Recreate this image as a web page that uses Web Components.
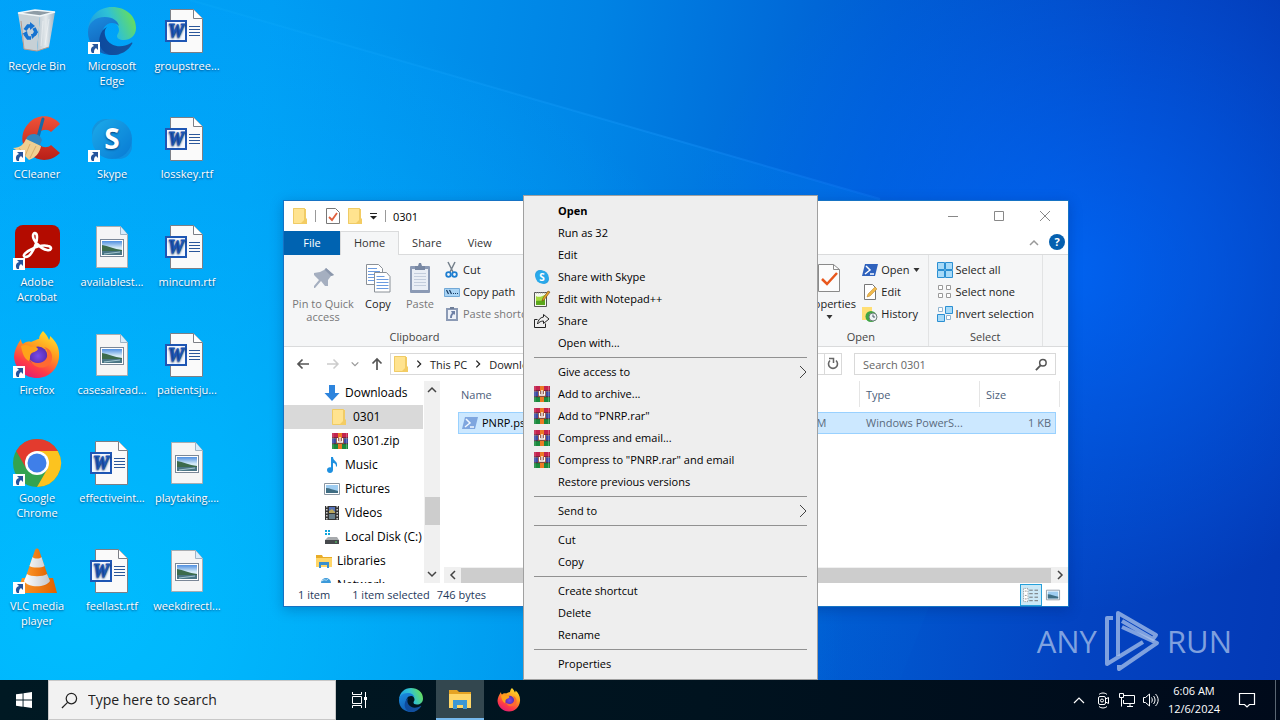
<!DOCTYPE html>
<html lang="en">
<head>
<meta charset="utf-8">
<title>Desktop</title>
<style>
  html, body {
    height: 100%;
  }
  body {
    margin: 0;
    overflow: hidden;
    font: 11px/15px "Open Sans", "Noto Sans", sans-serif;
    color: #111;
  }
</style>
</head>
<body>
<desktop-shell>
  <desktop-icon icon="recycle">Recycle Bin</desktop-icon>
  <desktop-icon icon="ccleaner" shortcut>CCleaner</desktop-icon>
  <desktop-icon icon="acrobat" shortcut>Adobe Acrobat</desktop-icon>
  <desktop-icon icon="firefox" shortcut>Firefox</desktop-icon>
  <desktop-icon icon="chrome" shortcut>Google Chrome</desktop-icon>
  <desktop-icon icon="vlc" shortcut>VLC media player</desktop-icon>
  <desktop-icon icon="edge" shortcut>Microsoft Edge</desktop-icon>
  <desktop-icon icon="skype" shortcut>Skype</desktop-icon>
  <desktop-icon icon="image">availablest...</desktop-icon>
  <desktop-icon icon="image">casesalread...</desktop-icon>
  <desktop-icon icon="word">effectiveint...</desktop-icon>
  <desktop-icon icon="word">feellast.rtf</desktop-icon>
  <desktop-icon icon="word">groupstree...</desktop-icon>
  <desktop-icon icon="word">losskey.rtf</desktop-icon>
  <desktop-icon icon="word">mincum.rtf</desktop-icon>
  <desktop-icon icon="word">patientsju...</desktop-icon>
  <desktop-icon icon="image">playtaking....</desktop-icon>
  <desktop-icon icon="image">weekdirectl...</desktop-icon>

  <brand-mark slot="overlay"></brand-mark>
  <explorer-window slot="overlay"></explorer-window>
  <context-menu slot="overlay">
    <menu-item primary>Open</menu-item>
    <menu-item>Run as 32</menu-item>
    <menu-item>Edit</menu-item>
    <menu-item icon="skype-small">Share with Skype</menu-item>
    <menu-item icon="notepad">Edit with Notepad++</menu-item>
    <menu-item icon="share">Share</menu-item>
    <menu-item>Open with...</menu-item>
    <hr>
    <menu-item submenu>Give access to</menu-item>
    <menu-item icon="rar">Add to archive...</menu-item>
    <menu-item icon="rar">Add to "PNRP.rar"</menu-item>
    <menu-item icon="rar">Compress and email...</menu-item>
    <menu-item icon="rar">Compress to "PNRP.rar" and email</menu-item>
    <menu-item>Restore previous versions</menu-item>
    <hr>
    <menu-item submenu>Send to</menu-item>
    <hr>
    <menu-item>Cut</menu-item>
    <menu-item>Copy</menu-item>
    <hr>
    <menu-item>Create shortcut</menu-item>
    <menu-item>Delete</menu-item>
    <menu-item>Rename</menu-item>
    <hr>
    <menu-item>Properties</menu-item>
  </context-menu>
  <task-bar slot="taskbar"></task-bar>
</desktop-shell>

<script>
// name: [viewBox width, viewBox height, markup]
const ICONS = {
  recycle: [48, 48, `
    <defs><linearGradient id="g" x1="0" x2="1"><stop offset="0" stop-color="#b9c6cf"/><stop offset=".5" stop-color="#e4e9ec"/><stop offset="1" stop-color="#9eb4c4"/></linearGradient></defs>
    <path d="M5 6 27 9 24 44 11 42Z" fill="#c6d0d6"/>
    <path d="M27 9 42 5 36 40 24 44Z" fill="url(#g)"/>
    <path d="M5 6 22 3 42 5 27 9Z" fill="#8e9ca6" stroke="#f1f6f8" stroke-width="1.4"/>
    <path d="M8 14 11 42 24 44 36 40" fill="none" stroke="#b99b8c" stroke-width="1"/>
    <path d="m30 14-2 25M36 12l-4 26" stroke="#fff" stroke-opacity=".4"/>
    <g fill="none" stroke="#1673d1" stroke-width="3.600"><path d="m12 23 3-4h3"/><path d="m21 21 2 4-2 3"/><path d="M18 31h-3l-3-4"/></g>
    <path d="m17 15 5 4-5 4zM24 27l-5 5-1-5zM9 27l5-3 1 5z" fill="#1673d1"/>`],
  edge: [48, 48, `
    <defs>
      <linearGradient id="a" x1="0" y1=".6" x2="1" y2=".3"><stop offset="0" stop-color="#1b9de2"/><stop offset=".5" stop-color="#2fc1d5"/><stop offset="1" stop-color="#6be052"/></linearGradient>
      <linearGradient id="b" x1="0" y1="0" x2=".4" y2="1"><stop offset="0" stop-color="#1b8de0"/><stop offset="1" stop-color="#1160b7"/></linearGradient>
      <linearGradient id="c" x1="0" x2="1"><stop offset="0" stop-color="#0d4a9e"/><stop offset="1" stop-color="#15549f"/></linearGradient>
    </defs>
    <path d="M0 23C1 9 11 0 24 0c14 0 24 9 24 21 0 8-6 12-12 12-5 0-7-2-7-4s2-3 2-6c0-5-5-10-13-10C8 13 2 17 0 23Z" fill="url(#a)"/>
    <path d="M0 25c0-9 7-15 17-15 8 0 13 4 14 9-2-2-4-3-7-3-7 0-11 7-9 15 2 9 9 16 17 16-3 1-5 1-8 1C10 48 0 38 0 25Z" fill="url(#b)"/>
    <path d="M19 20c-3 3-3 8 0 13 4 6 14 9 24 3 1-1 2 0 1 1-4 7-11 11-19 11-10 0-16-10-13-19 1-4 3-7 7-9Z" fill="url(#c)"/>`],
  skype: [48, 48, `
    <defs><linearGradient id="s" x1="0" x2="1" y2="1"><stop offset="0" stop-color="#1cabea"/><stop offset="1" stop-color="#0879d3"/></linearGradient></defs>
    <circle cx="18" cy="18" r="14" fill="#1595dc"/><circle cx="31" cy="31" r="13" fill="#0f8fe0"/>
    <circle cx="24" cy="24" r="20" fill="url(#s)"/>
    <text x="24" y="34" text-anchor="middle" font-family="Open Sans" font-weight="700" font-size="28" fill="#fff">S</text>`],
  "skype-small": [16, 16, `
    <circle cx="6" cy="6" r="5" fill="#2aa2e3"/><circle cx="10" cy="10" r="5" fill="#2aa2e3"/><circle cx="8" cy="8" r="6.5" fill="#2aa9ea"/>
    <text x="8" y="12" text-anchor="middle" font-family="Open Sans" font-weight="700" font-size="10" fill="#fff">S</text>`],
  ccleaner: [48, 48, `
    <defs><linearGradient id="r" y2="1" x2="0"><stop offset="0" stop-color="#ef5238"/><stop offset="1" stop-color="#b91f18"/></linearGradient></defs>
    <path d="M47 9 38 17c-3-3-8-3-11 0-4 4-4 10 0 13 3 3 8 3 11 0l9 8C38 47 25 47 17 39 7 31 7 17 16 8c8-9 23-9 31 1Z" fill="url(#r)"/>
    <path d="M30 4 25 22" stroke="#176ba8" stroke-width="3" stroke-linecap="round"/>
    <path d="M14 22c4-5 13-4 15 3l-3 7-14-5Z" fill="#3286bf"/>
    <path d="m13 24 15 7c-1 7-6 12-12 14l-4-4-4 1-2-5-6-4c7 0 11-4 13-9Z" fill="#f0cf91"/>
    <path d="m6 33 6 8 5-12M17 43l6-12" fill="none" stroke="#d9ad6c"/>`],
  acrobat: [48, 48, `
    <rect x="2" y="2" width="45" height="43" rx="8" fill="#b30b00"/>
    <path d="M12 34c-3-1 0-5 7-8 6-3 12-4 16-3 5 1 3 5-1 4-6-1-14-9-14-14 0-4 4-4 4 1 0 7-6 21-12 20Z" fill="none" stroke="#fff" stroke-width="2.6" stroke-linejoin="round"/>`],
  firefox: [48, 48, `
    <defs>
      <linearGradient id="f" x1=".8" y1="0" x2=".3" y2="1"><stop offset="0" stop-color="#ffe52e"/><stop offset=".4" stop-color="#ff9a1f"/><stop offset=".75" stop-color="#ff3b47"/><stop offset="1" stop-color="#e01c74"/></linearGradient>
      <radialGradient id="p"><stop offset="0" stop-color="#7a4bea"/><stop offset="1" stop-color="#5a2cb0"/></radialGradient>
    </defs>
    <path d="M30 0c3 3 5 6 6 9 1-1 1-3 1-4 6 5 10 12 9 21-1 12-10 21-22 21S2 38 1 26C1 20 4 14 8 8c0 3 1 4 2 5 2-2 5-3 8-2 3-1 6-3 8-3 0-3 2-6 4-8Z" fill="url(#f)"/>
    <circle cx="25" cy="25" r="9.5" fill="url(#p)"/>
    <path d="M8 15c4-2 8-1 10 1 4-1 6 0 7 2-1 3-6 3-7 5-2 2 0 5-2 7-5-2-7-9-8-15Z" fill="#ffa21a"/>
    <path d="M16 27c3 6 13 7 17 1 3-5 1-10-2-12 7 1 10 9 7 15-4 8-18 8-22-4Z" fill="#ff6a31"/>`],
  chrome: [48, 48, `
    <circle cx="24" cy="24" r="24" fill="#33a350"/>
    <path d="M3.200 12A24 24 0 0 1 44.800 12H24Z" fill="#e33b2e"/>
    <path d="M3.200 12 13.600 30 24 12Z" fill="#e33b2e"/>
    <path d="M44.800 12A24 24 0 0 1 24 48L34.400 30 24 12Z" fill="#fcc31f"/>
    <circle cx="24" cy="24" r="12" fill="#fff"/><circle cx="24" cy="24" r="9.500" fill="#3f7fe9"/>`],
  vlc: [48, 48, `
    <defs><linearGradient id="v" x2="1"><stop offset="0" stop-color="#ff9a2c"/><stop offset="1" stop-color="#e06100"/></linearGradient><linearGradient id="w" x2="1"><stop offset="0" stop-color="#fff"/><stop offset="1" stop-color="#c4c6ca"/></linearGradient></defs>
    <path d="M9 31h31l4 15H4Z" fill="url(#v)"/>
    <path d="M22 3c1-2 3-2 4 0l11 32c-4 7-22 7-26 0Z" fill="url(#v)"/>
    <path d="m19.500 10-3 9c3 2 12 2 15 0l-3-9c-2 2-7 2-9 0ZM14 27l-3 7c4 7 22 7 26 0l-3-7c-4 3-16 3-20 0Z" fill="url(#w)"/>`],
  word: [48, 48, `
    <path d="M7.500 2.500h23l9 9v34h-32Z" fill="#fafafa" stroke="#7c7f86"/>
    <path d="M30.500 2.500v9h9" fill="#fff" stroke="#7c7f86"/>
    <path d="M26 19.500h11M26 22.500h11M26 25.500h11M26 28.500h11" stroke="#2b579a"/>
    <rect x="3" y="14" width="20" height="20" fill="#f4f8ff" stroke="#1e56b4" stroke-width="2"/>
    <text x="13" y="30" text-anchor="middle" font-family="Liberation Serif" font-style="italic" font-weight="700" font-size="18" fill="#1e56b4" stroke="#1e56b4">W</text>`],
  image: [48, 48, `
    <defs><linearGradient id="k" x2="0" y2="1"><stop offset="0" stop-color="#4f8fe0"/><stop offset=".5" stop-color="#d7ecf8"/><stop offset="1" stop-color="#c7dfe6"/></linearGradient></defs>
    <path d="M8.500 3.500h24l7 8v33h-31Z" fill="#f5f5f5" stroke="#a9adb1"/><path d="M32.500 3.500v8h7" fill="#d9ecfb" stroke="#9fb3c4"/>
    <rect x="12.500" y="16.500" width="23" height="17" fill="#fff" stroke="#7a8797"/>
    <rect x="14" y="18" width="20" height="14" fill="url(#k)"/>
    <path d="M14 22c6 1 12 4 20 5v1H14Z" fill="#3c6b4c"/><path d="M14 28h20v4H14Z" fill="#4a7585"/><path d="m16 31 16-2" stroke="#a4c5cf"/>`],
  shortcut: [12, 12, `<path d="M0 0h12v12H0Z" fill="#fff"/><path d="M4 2h6v6L8 6c-2 1-2 3-2 5H4C2 8 3 5 6 4Z" fill="#27559c"/>`],
  folder: [14, 16, `<path d="M0 0h12v16H0Z" fill="#ffe38f"/><path d="M.5.500h11v15H.5Z" fill="none" stroke="#efcb66"/><path d="M12 1h1v9l1 1v5H7l5-5Z" fill="#f3cc63"/>`],
  props: [14, 16, `<path d="M.5.5h9l4 4v11H.5Z" fill="#fff" stroke="#777"/><path d="m3 9 3 3 5-7" fill="none" stroke="#e0603e" stroke-width="1.800"/>`],
  "props-big": [24, 32, `<path d="M1.500 2.500h15l6 5v22h-21Z" fill="#fcfcfc" stroke="#8a8a8a"/><path d="M16.500 2.500v5h6" fill="none" stroke="#8a8a8a"/><path d="m5 17 5 5L20 11" fill="none" stroke="#e8571c" stroke-width="2.500"/>`],
  qat: [7, 7, `<path d="M0 .5h7" stroke="#222"/><path d="M0 3h7L3.500 6.500Z" fill="#222"/>`],
  caret: [7, 4, `<path d="M.5 0h6l-3 4Z" fill="#333"/>`],
  pin: [32, 32, `<path d="m19 6 8 7-3 1-3 4 0 6-3 0-4-5-6 7-1 0 0-2 5-6-5-5 0-2 6-1 4-2Z" fill="#a5afc0"/><path d="m19 6 8 7-3 1-6-6Z" fill="#8b97ac"/>`],
  copy: [26, 32, `<g fill="#fff" stroke="#8a9097"><path d="M1.500 2.500h12l4 4v16h-16Z"/><path d="M9.500 10.500h12l3.500 4v15.500H9.500Z"/></g><path d="M3 6.500h9M3 9.500h12M3 12.500h6M3 15.500h6M3 18.500h6M11.500 14.500h8M11.500 17.500h12M11.500 20.500h12M11.500 23.500h12M11.500 26.500h12" stroke="#6b9be0"/>`],
  paste: [22, 32, `<rect x="1" y="4" width="20" height="27" rx="1" fill="#8b9ab5"/><path d="M3 7h16v21H3Z" fill="#e9eef6"/><path d="M6 4h3l1-3h2l1 3h3v4H6Z" fill="#7888a3"/><path d="M5 11.500h12M5 14.500h12M5 17.500h12M5 20.500h12M5 23.500h12" stroke="#c3cddd"/>`],
  cut: [16, 16, `<path d="m4 0 5 10M11 0 6 10" stroke="#75808c" stroke-width="1.500"/><g fill="none" stroke="#1f7fd1" stroke-width="1.800"><circle cx="4.500" cy="12.500" r="2.300"/><circle cx="10.500" cy="12.500" r="2.300"/></g>`],
  "copy-path": [16, 16, `<path d="M.5 4.500h15v8H.5Z" fill="#a9d4f5" stroke="#72a8d6"/><path d="m2.500 6 2 4M5.500 6l2 4M9 9.500h1M11 9.500h1M13 9.500h1" stroke="#163a63" stroke-width="1.200"/>`],
  "paste-shortcut": [16, 16, `<path d="M2 2h12v13H2Z" fill="#8b9ab5"/><path d="M4 4h8v9H4Z" fill="#edf1f8"/><path d="M6 1h4v2H6Z" fill="#6e7d97"/><path d="M7 5h4v4l-1-1c-2 1-2 2-2 4H6c0-3 1-4 2-5Z" fill="#6e80a6"/>`],
  powershell: [16, 16, `<path d="M3 2h13l-3 12H0Z" fill="#2f62bd"/><path d="m4 4 4 4-5 4M8 12h4" fill="none" stroke="#fff" stroke-width="1.500"/>`],
  "powershell-soft": [16, 16, `<path d="M3 2h13l-3 12H0Z" fill="#7fa6df"/><path d="m4 4 4 4-5 4M8 12h4" fill="none" stroke="#f1f8ff" stroke-width="1.500"/>`],
  edit: [16, 16, `<path d="M2.500.5h8l3 3v12h-11Z" fill="#fff" stroke="#777"/><path d="m5 13 1-3 7-7 2 2-7 7Z" fill="#f0ba4c" stroke="#b98128" stroke-width=".5"/>`],
  history: [16, 16, `<path d="M0 1h10v13H0Z" fill="#ffdf75"/><circle cx="9" cy="10.500" r="5.500" fill="#3fa545"/><circle cx="11" cy="11" r="4" fill="#eef3f4" stroke="#6b8078"/><path d="M11 8.500V11h2" fill="none" stroke="#456"/>`],
  "select-all": [16, 16, `<g fill="#a7daf8" stroke="#2b8fd2"><path d="M.5.5h7v7h-7zM8.500.5h7v7h-7zM.5 8.500h7v7h-7zM8.500 8.500h7v7h-7z"/></g>`],
  "select-none": [16, 16, `<g fill="#fff" stroke="#9a9a9a"><path d="M1.500 1.500h4v4h-4zM9.500 1.500h4v4h-4zM1.500 9.500h4v4h-4zM9.500 9.500h4v4h-4z"/></g>`],
  invert: [16, 16, `<g fill="#a7daf8" stroke="#2b8fd2"><path d="M8.500.5h7v7h-7zM.5 8.500h7v7h-7z"/></g><g fill="#fff" stroke="#8fb4d0"><path d="M1.500 1.500h4v4h-4zM9.500 9.500h4v4h-4z"/></g>`],
  minimize: [12, 12, `<path d="M1 6.500h10" stroke="#888"/>`],
  maximize: [12, 12, `<path d="M1.500 1.500h9v9h-9z" fill="none" stroke="#888"/>`],
  close: [12, 12, `<path d="m1 1 10 10M11 1 1 11" stroke="#888"/>`],
  "chevron-up": [12, 12, `<path d="m2 8 4-4 4 4" fill="none" stroke="currentColor" stroke-width="1.500"/>`],
  "chevron-down": [12, 12, `<path d="m2 4 4 4 4-4" fill="none" stroke="currentColor" stroke-width="1.500"/>`],
  "chevron-left": [12, 12, `<path d="M8 2 4 6l4 4" fill="none" stroke="currentColor" stroke-width="1.500"/>`],
  "chevron-right": [12, 12, `<path d="m4 2 4 4-4 4" fill="none" stroke="currentColor" stroke-width="1.500"/>`],
  hidden: [12, 12, `<path d="m1 9 5-5 5 5" fill="none" stroke="currentColor" stroke-width="1.200"/>`],
  submenu: [8, 14, `<path d="m1 1 6 6-6 6" fill="none" stroke="#444"/>`],
  help: [16, 16, `<circle cx="8" cy="8" r="8" fill="#0560b0"/><text x="8" y="12" text-anchor="middle" font-family="Open Sans" font-weight="700" font-size="11" fill="#fff">?</text>`],
  back: [14, 14, `<path d="M13 7H2M6.500 2.500 2 7l4.500 4.500" fill="none" stroke="currentColor" stroke-width="1.700"/>`],
  forward: [14, 14, `<path d="M1 7h11M7.500 2.500 12 7l-4.500 4.500" fill="none" stroke="currentColor" stroke-width="1.500"/>`],
  up: [14, 14, `<path d="M7 13V2M2.500 6.500 7 2l4.500 4.500" fill="none" stroke="currentColor" stroke-width="1.700"/>`],
  refresh: [14, 14, `<path d="M4 3.500a4.500 4.500 0 1 0 6 0" fill="none" stroke="#666" stroke-width="1.600"/><path d="M3 1.500h4.500V6" fill="none" stroke="#666" stroke-width="1.500"/>`],
  magnifier: [14, 14, `<circle cx="8.500" cy="5" r="3.500" fill="none" stroke="#555" stroke-width="1.600"/><path d="m6 8-5 5" stroke="#555" stroke-width="2"/>`],
  downloads: [16, 16, `<path d="M5 0h6v8h4.500L8 16 .5 8H5Z" fill="#2d84dd"/>`],
  rar: [16, 16, `
    <path d="M0 0h16v5H0Z" fill="#c3224d"/><path d="M0 5.500h16v5H0Z" fill="#3b4ba5"/><path d="M0 11h16v5H0Z" fill="#198a3c"/>
    <path d="M0 5h16M0 10.700h16" stroke="#3a2030"/><path d="M1 0v16M14.500 0v16" stroke="#fff" stroke-opacity=".25"/>
    <path d="M6 0h4v16H6Z" fill="#ec7a24"/><path d="M4 5h8v6H4Z" fill="#8b4a3c"/><path d="M5.500 5v4h5V5M8 4v4" fill="none" stroke="#fff" stroke-width="1.300"/>`],
  music: [16, 16, `<path d="M7 0h2c0 4 5 4 4 9l-1 1c0-3-1-4-3-4v7c0 4-6 4-6 0 0-2 2-3 4-2.500Z" fill="#1e90e0"/>`],
  pictures: [16, 16, `<path d="M.5 2.500h15v11H.5Z" fill="#fff" stroke="#8a96a2"/><path d="M2 4h12v8H2Z" fill="#9fcdf1"/><path d="M2 7c4 0 7 2 12 3v2H2Z" fill="#3f6d83"/>`],
  videos: [16, 16, `<path d="M1 1h14v14H1Z" fill="#343434"/><path d="M5 2h6v6H5Z" fill="#5672b8"/><path d="M5 9h6v5H5Z" fill="#69808c"/><path d="m5 6 3-2 3 3v1H5Z" fill="#baa85d"/><path d="M2.800 1v14M13.200 1v14" stroke="#ddd" stroke-width="1.400" stroke-dasharray="1.500 1.500"/>`],
  disk: [16, 16, `<path d="M1 1h2v2H1zM4 1h2v2H4zM1 4h2v2H1zM4 4h2v2H4z" fill="#10a5dc"/><path d="m4 8-3 3h14l-2-3Z" fill="#a7aaad"/><path d="M1 11h14v4H1Z" fill="#46494c"/><path d="M11 13h2" stroke="#53d769"/>`],
  libraries: [16, 16, `<path d="M0 2h6l1 2h9v10H0Z" fill="#e8ac27"/><path d="M0 5h16v9H0Z" fill="#ffd668"/><path d="M3 15V9h10v6h-2v-3H5v3Z" fill="#398fcf"/>`],
  network: [16, 16, `<circle cx="10" cy="6" r="5" fill="#3c9ada"/><path d="M6 4c3-3 4 1 6-2" stroke="#c0e3f5" fill="none"/><path d="M1 7h9v7H1Z" fill="#2d78b8"/>`],
  details: [18, 16, `<path d="M.5.5h5v15h-5z" fill="#fff" stroke="#888" stroke-dasharray="1 1"/><path d="M2 3.500h2M2 8.500h2M2 12.500h2" stroke="#888"/><path d="M7 2.500h4m2 0h4M7 6.500h4m2 0h4M7 10.500h4m2 0h4M7 14.500h4m2 0h4" stroke="#666"/>`],
  notepad: [16, 16, `<path d="M.5 1.500h12v14H.5Z" fill="#f4f8ea" stroke="#555"/><path d="M2 5c3 2 6 0 9-1v10H2Z" fill="#a4db3c"/><path d="M2 10c3-1 6 1 9-2v6H2Z" fill="#5ba71b"/><path d="m2 2 9 0" stroke="#999" stroke-dasharray="1 1"/><path d="m8 10 1-3 5-7 2 1-6 8Z" fill="#e9a428" stroke="#6b4c17" stroke-width=".6"/>`],
  share: [16, 16, `<path d="M3.500 6.500h-3v8h11v-4" fill="none" stroke="#222"/><path d="M9.500 1.500 15 6l-5.500 4.500V8C7 8 5 9 3.500 11 4 7 6 4.500 9.500 4Z" fill="none" stroke="#222"/>`],
  windows: [16, 16, `<path d="m0 2.300 6.600-.9v6.200H0zM7.500 1.300 16 0v7.600H7.500zM0 8.500h6.600v6.200L0 13.800zM7.500 8.500H16V16l-8.500-1.200z" fill="#fff"/>`],
  search: [18, 18, `<circle cx="11" cy="7" r="5.500" fill="none" stroke="#222" stroke-width="1.300"/><path d="m7 11-6 6" stroke="#222" stroke-width="1.300"/>`],
  "task-view": [18, 16, `<g fill="none" stroke="#fff"><path d="M1.500 0v2.500h9V0M1.500 16v-2.500h9V16M1.500 4.500h9v7h-9z"/><path d="M14.500 0v16"/></g><path d="M13 5h3v3h-3z" fill="#fff"/>`],
  explorer: [24, 24, `<path d="M1 3h8l2 2h12v16H1Z" fill="#e5a323"/><path d="M1 7h22v14H1Z" fill="#ffd667"/><path d="M5 22v-9h14v9h-4v-4H9v4Z" fill="#3e97d3"/><path d="M9 18h6v3H9Z" fill="#ffd667"/>`],
  camera: [16, 16, `<g fill="none" stroke="#fff"><rect x="3.500" y="4.500" width="7" height="8" rx="1.500"/><circle cx="7" cy="8.500" r="1.500"/><path d="m10.500 7 3-1.500v6l-3-1.500M4 2.500c2-2 6-2 8 0M4 14.500c2 2 6 2 8 0"/></g>`],
  ethernet: [16, 16, `<g fill="none" stroke="#fff"><path d="M5 3.500h10.500v8H4.500V8M8 14.500h6M11 11.500v3"/><path d="M.5 1.500h4v4h-4zM2.500 5.500v9"/></g>`],
  volume: [18, 16, `<g fill="none" stroke="#fff"><path d="M1.500 5.500h2l4-3.500v12l-4-3.500h-2zM9.500 5.500c1 1.500 1 3.500 0 5M11.500 4c2 2.500 2 5.500 0 8M13.500 2c3.500 3.500 3.500 8.500 0 12"/></g>`],
  notice: [16, 16, `<path d="M.5 1.500h15v11h-5L8 15l-2.500-2.500h-5Z" fill="none" stroke="#fff" stroke-width="1.200"/>`],
  play: [54, 62, `
    <g fill="none" stroke="#a9c1ea" stroke-opacity=".75" stroke-width="4" stroke-linejoin="round">
      <path d="M13 46V3l38 22-3 4-31-18"/>
      <path d="M8 8H2v46l36-22M17 17l35 16-38 26v-4"/>
    </g>`]
};

class WinIcon extends HTMLElement {
  constructor() {
    super();
    this.attachShadow({ mode: "open" });
  }

  static get observedAttributes() {
    return ["name", "size"];
  }

  attributeChangedCallback() {
    this.render();
  }

  render() {
    const entry = ICONS[this.getAttribute("name")];
    if (!entry) {
      return;
    }
    const [width, height, markup] = entry;
    const drawnWidth = Number(this.getAttribute("size")) || width;
    const drawnHeight = Math.round((drawnWidth * height) / width);
    this.shadowRoot.innerHTML = `
      <style>
        :host { display: block; flex: none; }
        svg { display: block; overflow: visible; }
      </style>
      <svg width="${drawnWidth}" height="${drawnHeight}" viewBox="0 0 ${width} ${height}" aria-hidden="true">${markup}</svg>
    `;
  }
}

class DesktopShell extends HTMLElement {
  constructor() {
    super();
    this.attachShadow({ mode: "open" }).innerHTML = `
      <style>
        :host {
          display: grid;
          grid-template-rows: 1fr auto;
          height: 100vh;
        }
        main {
          position: relative;
          min-height: 0;
          background:
            radial-gradient(ellipse 30% 50% at 83% 40%, rgba(0, 108, 255, 0.75), rgba(0, 100, 255, 0) 100%),
            radial-gradient(ellipse 60% 95% at 6% 90%, rgba(0, 190, 255, 0.95), rgba(0, 184, 255, 0) 100%),
            linear-gradient(97deg, #00a2f8 0%, #009df4 20%, #0083e4 44%, #005cd2 66%, #0344c2 84%, #0339b6 100%);
        }
        .beam {
          position: absolute;
          inset: 0;
          width: 100%;
          height: 100%;
        }
        .icons {
          position: relative;
          display: grid;
          grid-auto-flow: column;
          grid-template-rows: repeat(6, 108px);
          grid-auto-columns: 74px;
          column-gap: 1px;
        }
      </style>
      <main>
        <svg class="beam" viewBox="0 0 1280 680" preserveAspectRatio="none" aria-hidden="true">
          <defs>
            <linearGradient id="glow" x1="0" y1="0" x2="1" y2="0">
              <stop offset="0" stop-color="#12b4ff" stop-opacity="0.15"/>
              <stop offset="0.7" stop-color="#1a9bff" stop-opacity="0.35"/>
              <stop offset="1" stop-color="#1a86ff" stop-opacity="0.25"/>
            </linearGradient>
            <linearGradient id="fall" x1="0.55" y1="0" x2="0.4" y2="1">
              <stop offset="0" stop-color="#00a0ff" stop-opacity="0.18"/>
              <stop offset="1" stop-color="#00a0ff" stop-opacity="0"/>
            </linearGradient>
          </defs>
          <path d="M190 0 1068 254 900 680H0V0Z" fill="url(#fall)"/>
          <path d="M190 0 880 199" stroke="url(#glow)" stroke-width="2"/>
        </svg>
        <div class="icons"><slot></slot></div>
        <slot name="overlay"></slot>
      </main>
      <slot name="taskbar"></slot>
    `;
  }
}

class DesktopIcon extends HTMLElement {
  constructor() {
    super();
    this.attachShadow({ mode: "open" });
  }

  connectedCallback() {
    const badge = this.hasAttribute("shortcut")
      ? `<win-icon class="badge" name="shortcut"></win-icon>`
      : "";
    this.shadowRoot.innerHTML = `
      <style>
        :host {
          display: flex;
          flex-direction: column;
          align-items: center;
          gap: 3px;
          padding: 7px 0;
          color: #fff;
          text-align: center;
          text-shadow: 0 1px 2px rgba(0, 30, 80, 0.7);
        }
        .picture {
          position: relative;
        }
        .badge {
          position: absolute;
          left: 0;
          bottom: 1px;
        }
        .label {
          width: 70px;
        }
      </style>
      <div class="picture">
        <win-icon name="${this.getAttribute("icon")}"></win-icon>
        ${badge}
      </div>
      <div class="label"><slot></slot></div>
    `;
  }
}

class BrandMark extends HTMLElement {
  constructor() {
    super();
    this.attachShadow({ mode: "open" }).innerHTML = `
      <style>
        :host {
          position: absolute;
          right: 48px;
          bottom: 8px;
          display: flex;
          align-items: center;
          gap: 8px;
          font: 31px/62px "Open Sans", sans-serif;
          color: rgba(169, 193, 234, 0.75);
        }
      </style>
      <span>ANY</span>
      <win-icon name="play"></win-icon>
      <span>RUN</span>
    `;
  }
}

class RibbonGroup extends HTMLElement {
  constructor() {
    super();
    this.attachShadow({ mode: "open" });
  }

  connectedCallback() {
    this.shadowRoot.innerHTML = `
      <style>
        :host {
          display: flex;
          flex-direction: column;
          justify-content: space-between;
          padding: 4px 5px 2px;
          border-right: 1px solid #e2e3e4;
          color: #444;
        }
        .tools {
          display: flex;
        }
        .name {
          text-align: center;
        }
      </style>
      <div class="tools"><slot></slot></div>
      <div class="name">${this.getAttribute("name")}</div>
    `;
  }
}

class RibbonButton extends HTMLElement {
  constructor() {
    super();
    this.attachShadow({ mode: "open" });
  }

  connectedCallback() {
    const caret = this.hasAttribute("menu") ? `<win-icon name="caret"></win-icon>` : "";
    const disabled = this.hasAttribute("disabled") ? "disabled" : "";
    this.shadowRoot.innerHTML = `
      <style>
        :host {
          display: block;
        }
        button {
          display: flex;
          align-items: center;
          gap: 3px;
          height: 22px;
          padding: 0 3px;
          border: 0;
          background: none;
          font: inherit;
          color: #222;
          white-space: nowrap;
        }
        button:disabled {
          color: #777;
        }
        span {
          padding-bottom: 2px;
        }
        :host([large]) button {
          flex-direction: column;
          width: 100%;
          height: auto;
          padding: 3px 0 0;
          line-height: 13px;
          white-space: normal;
        }
      </style>
      <button type="button" ${disabled}>
        <win-icon name="${this.getAttribute("icon")}"></win-icon>
        <span><slot></slot></span>
        ${caret}
      </button>
    `;
  }
}

class TreeItem extends HTMLElement {
  constructor() {
    super();
    this.attachShadow({ mode: "open" });
  }

  connectedCallback() {
    const depth = Number(this.getAttribute("depth")) || 0;
    this.shadowRoot.innerHTML = `
      <style>
        :host {
          display: grid;
          grid-template-columns: 16px 1fr;
          align-items: center;
          justify-items: start;
          gap: 5px;
          height: 24px;
          padding-left: ${32 + depth * 8}px;
          font-size: 12px;
          color: #000;
          white-space: nowrap;
        }
        :host([selected]) {
          background: #d9d9d9;
        }
        span {
          padding-bottom: 2px;
        }
      </style>
      <win-icon name="${this.getAttribute("icon")}"></win-icon>
      <span><slot></slot></span>
    `;
  }
}

class ExplorerWindow extends HTMLElement {
  constructor() {
    super();
    this.attachShadow({ mode: "open" }).innerHTML = `
      <style>
        :host {
          position: absolute;
          left: 283px;
          top: 200px;
          display: flex;
          flex-direction: column;
          box-sizing: border-box;
          width: 786px;
          height: 407px;
          border: 1px solid #1673c4;
          background: #fff;
          box-shadow: 0 3px 12px rgba(0, 20, 80, 0.25);
        }
        button {
          display: grid;
          place-items: center;
          padding: 0;
          border: 0;
          background: none;
          font: inherit;
          color: #555;
        }
        .title {
          display: flex;
          align-items: center;
          height: 30px;
          padding-bottom: 1px;
          margin-bottom: -1px;
        }
        .quick {
          display: flex;
          align-items: center;
          gap: 8px;
          padding-left: 9px;
        }
        .rule {
          width: 1px;
          height: 12px;
          background: #999;
        }
        .rule + win-icon {
          margin-left: 2px;
        }
        h1 {
          margin: 0 auto 0 7px;
          font: inherit;
          font-size: 11px;
          color: #000;
        }
        .title > button {
          width: 46px;
          height: 28px;
        }
        .tabs {
          display: flex;
          height: 23px;
          border-bottom: 1px solid #dadbdc;
        }
        .tabs button {
          height: 24px;
          padding: 0 13px 2px;
          color: #333;
        }
        .tabs .file {
          width: 56px;
          background: #0063b1;
          color: #fff;
        }
        .tabs .active {
          box-sizing: border-box;
          border: 1px solid #dadbdc;
          border-bottom: 0;
          background: #f5f6f7;
        }
        .tabs .collapse {
          margin-left: auto;
          padding: 0 9px;
          color: #999;
        }
        .tabs .help {
          padding: 0 3px 2px 0;
        }
        .ribbon {
          display: flex;
          height: 91px;
          border-bottom: 1px solid #dadbdc;
          background: #f5f6f7;
        }
        .ribbon .fill {
          flex: 1;
        }
        .ribbon .end {
          width: 25px;
        }
        .wide { width: 68px; }
        .mid { width: 42px; }
        .props { width: 60px; }
        .address {
          display: flex;
          align-items: center;
          height: 34px;
          padding: 0 12px 0 12px;
        }
        .address > button {
          width: 14px;
          margin-right: 16px;
        }
        .address > .forward { color: #ccc; margin-right: 10px; }
        .address > .recent { width: 10px; margin-right: 10px; color: #999; }
        .address > .up { margin-right: 6px; }
        .path {
          display: flex;
          flex: 1;
          align-items: center;
          gap: 6px;
          box-sizing: border-box;
          height: 22px;
          padding-left: 3px;
          border: 1px solid #d9d9d9;
          color: #222;
        }
        .path a {
          color: inherit;
          text-decoration: none;
        }
        .path .expand {
          margin-left: auto;
        }
        .path .reload {
          align-self: stretch;
          padding: 0 1px;
          border-left: 1px solid #d9d9d9;
        }
        .search {
          display: flex;
          align-items: center;
          box-sizing: border-box;
          width: 202px;
          height: 22px;
          margin-left: 12px;
          padding: 0 7px 0 8px;
          border: 1px solid #d9d9d9;
        }
        input {
          flex: 1;
          min-width: 0;
          padding: 0;
          border: 0;
          outline: 0;
          background: none;
          font: inherit;
        }
        input::placeholder {
          color: #666;
        }
        .body {
          display: flex;
          flex: 1;
          min-height: 0;
        }
        .tree {
          width: 139px;
          overflow: hidden;
        }
        .vbar {
          display: flex;
          flex-direction: column;
          align-items: center;
          width: 16px;
          margin: 0 4px 0 1px;
          background: #f0f0f0;
        }
        .vbar button, .hbar button {
          color: #444;
        }
        .vbar button {
          height: 18px;
        }
        .vbar i {
          width: 15px;
          height: 28px;
          margin-top: auto;
          margin-bottom: 40px;
          background: #cdcdcd;
        }
        .files {
          display: flex;
          flex: 1;
          flex-direction: column;
          justify-content: space-between;
          min-width: 0;
        }
        .hbar {
          display: flex;
          align-items: center;
          height: 16px;
          background: #f0f0f0;
        }
        .hbar button {
          width: 17px;
        }
        .hbar i {
          flex: 1;
          height: 15px;
          background: #cdcdcd;
        }
        table {
          margin: 0 8px 0 14px;
          border-spacing: 0;
          table-layout: fixed;
          color: #5a6a7d;
        }
        th {
          box-sizing: border-box;
          height: 26px;
          padding: 0 6px;
          border-right: 1px solid #e5e5e5;
          font-weight: 400;
          text-align: left;
          color: #4c607a;
        }
        th:first-child, td:first-child {
          padding-left: 3px;
        }
        th:nth-child(4) {
          border-right: 0;
        }
        th:last-child, td:last-child {
          padding: 0;
        }
        .gap td {
          height: 5px;
        }
        .picked td {
          box-sizing: border-box;
          height: 22px;
          padding: 0 6px 1px;
          border: 1px solid #99d1ff;
          border-width: 1px 0;
          background: #cce8ff;
          white-space: nowrap;
        }
        .picked td:first-child {
          padding-left: 3px;
          border-left-width: 1px;
        }
        .picked td:nth-child(4) {
          padding-right: 4px;
          border-right-width: 1px;
          text-align: right;
        }
        .picked td:last-child {
          padding: 0;
          border: 0;
          background: none;
        }
        .file-name {
          display: flex;
          align-items: center;
          gap: 4px;
          color: #000;
        }
        .status {
          display: flex;
          align-items: center;
          height: 23px;
          padding: 0 4px 0 14px;
          color: #1e395b;
        }
        .status span {
          margin-right: 22px;
        }
        .status span + span {
          margin-right: 7px;
        }
        .status button {
          box-sizing: border-box;
          width: 22px;
          height: 22px;
        }
        .status .on {
          margin-left: auto;
          border: 1px solid #26a0da;
          background: #cbe8f6;
        }
      </style>
      <div class="title">
        <div class="quick">
          <win-icon name="folder"></win-icon>
          <div class="rule"></div>
          <win-icon name="props"></win-icon>
          <win-icon name="folder"></win-icon>
          <win-icon name="qat"></win-icon>
          <div class="rule"></div>
        </div>
        <h1>0301</h1>
        <button type="button" aria-label="Minimize"><win-icon name="minimize"></win-icon></button>
        <button type="button" aria-label="Maximize"><win-icon name="maximize"></win-icon></button>
        <button type="button" aria-label="Close"><win-icon name="close"></win-icon></button>
      </div>
      <div class="tabs">
        <button type="button" class="file">File</button>
        <button type="button" class="active">Home</button>
        <button type="button">Share</button>
        <button type="button">View</button>
        <button type="button" class="collapse" aria-label="Collapse ribbon"><win-icon name="chevron-up"></win-icon></button>
        <button type="button" class="help" aria-label="Help"><win-icon name="help"></win-icon></button>
      </div>
      <div class="ribbon">
        <ribbon-group name="Clipboard">
          <ribbon-button class="wide" large disabled icon="pin">Pin to Quick access</ribbon-button>
          <ribbon-button class="mid" large icon="copy">Copy</ribbon-button>
          <ribbon-button class="mid" large disabled icon="paste">Paste</ribbon-button>
          <div>
            <ribbon-button icon="cut">Cut</ribbon-button>
            <ribbon-button icon="copy-path">Copy path</ribbon-button>
            <ribbon-button disabled icon="paste-shortcut">Paste shortcut</ribbon-button>
          </div>
        </ribbon-group>
        <div class="fill"></div>
        <ribbon-group name="Open">
          <ribbon-button class="props" large menu icon="props-big">Properties</ribbon-button>
          <div>
            <ribbon-button menu icon="powershell">Open</ribbon-button>
            <ribbon-button icon="edit">Edit</ribbon-button>
            <ribbon-button icon="history">History</ribbon-button>
          </div>
        </ribbon-group>
        <ribbon-group name="Select">
          <div>
            <ribbon-button icon="select-all">Select all</ribbon-button>
            <ribbon-button icon="select-none">Select none</ribbon-button>
            <ribbon-button icon="invert">Invert selection</ribbon-button>
          </div>
        </ribbon-group>
        <div class="end"></div>
      </div>
      <div class="address">
        <button type="button" aria-label="Back"><win-icon name="back"></win-icon></button>
        <button type="button" class="forward" aria-label="Forward"><win-icon name="forward"></win-icon></button>
        <button type="button" class="recent" aria-label="Recent locations"><win-icon name="chevron-down" size="10"></win-icon></button>
        <button type="button" class="up" aria-label="Up"><win-icon name="up"></win-icon></button>
        <div class="path">
          <win-icon name="folder"></win-icon>
          <win-icon name="chevron-right" size="10"></win-icon>
          <a href="#pc">This PC</a>
          <win-icon name="chevron-right" size="10"></win-icon>
          <a href="#downloads">Downloads</a>
          <button type="button" class="expand" aria-label="Previous locations"><win-icon name="chevron-down" size="10"></win-icon></button>
          <button type="button" class="reload" aria-label="Refresh"><win-icon name="refresh"></win-icon></button>
        </div>
        <div class="search">
          <input type="text" aria-label="Search 0301" placeholder="Search 0301">
          <win-icon name="magnifier" size="13"></win-icon>
        </div>
      </div>
      <div class="body">
        <div class="tree">
          <tree-item depth="1" icon="downloads">Downloads</tree-item>
          <tree-item depth="2" icon="folder" selected>0301</tree-item>
          <tree-item depth="2" icon="rar">0301.zip</tree-item>
          <tree-item depth="1" icon="music">Music</tree-item>
          <tree-item depth="1" icon="pictures">Pictures</tree-item>
          <tree-item depth="1" icon="videos">Videos</tree-item>
          <tree-item depth="1" icon="disk">Local Disk (C:)</tree-item>
          <tree-item icon="libraries">Libraries</tree-item>
          <tree-item icon="network">Network</tree-item>
        </div>
        <div class="vbar">
          <button type="button" aria-label="Scroll up"><win-icon name="chevron-up"></win-icon></button>
          <i></i>
          <button type="button" aria-label="Scroll down"><win-icon name="chevron-down"></win-icon></button>
        </div>
        <div class="files">
          <table>
            <colgroup><col><col style="width: 136px"><col style="width: 120px"><col style="width: 76px"><col style="width: 4px"></colgroup>
            <thead>
              <tr><th>Name</th><th></th><th>Type</th><th>Size</th><th></th></tr>
            </thead>
            <tbody>
              <tr class="gap"><td colspan="5"></td></tr>
              <tr class="picked">
                <td><div class="file-name"><win-icon name="powershell-soft"></win-icon>PNRP.ps1</div></td>
                <td>12/6/2024 6:05 AM</td>
                <td>Windows PowerS...</td>
                <td>1 KB</td>
                <td></td>
              </tr>
            </tbody>
          </table>
          <div class="hbar">
            <button type="button" aria-label="Scroll left"><win-icon name="chevron-left"></win-icon></button>
            <i></i>
            <button type="button" aria-label="Scroll right"><win-icon name="chevron-right"></win-icon></button>
          </div>
        </div>
      </div>
      <div class="status">
        <span>1 item</span>
        <span>1 item selected</span>
        <span>746 bytes</span>
        <button type="button" class="on" aria-label="Details"><win-icon name="details" size="16"></win-icon></button>
        <button type="button" aria-label="Large icons"><win-icon name="pictures" size="14"></win-icon></button>
      </div>
    `;
  }
}

class ContextMenu extends HTMLElement {
  constructor() {
    super();
    this.attachShadow({ mode: "open" }).innerHTML = `
      <style>
        :host {
          position: absolute;
          left: 523px;
          top: 195px;
          box-sizing: border-box;
          width: 295px;
          padding: 4px 0;
          border: 1px solid #a0a0a0;
          background: #eee;
        }
        ::slotted(hr) {
          height: 1px;
          margin: 3px 10px;
          border: 0;
          background: #919191;
        }
      </style>
      <slot></slot>
    `;
  }
}

class MenuItem extends HTMLElement {
  constructor() {
    super();
    this.attachShadow({ mode: "open" });
  }

  connectedCallback() {
    const icon = this.getAttribute("icon");
    this.shadowRoot.innerHTML = `
      <style>
        :host {
          display: block;
        }
        button {
          display: grid;
          grid-template-columns: 16px 1fr auto;
          align-items: center;
          column-gap: 8px;
          width: 100%;
          height: 22px;
          padding: 0 10px;
          border: 0;
          background: none;
          font: inherit;
          color: #000;
          text-align: left;
        }
        .text {
          padding-bottom: 2px;
        }
        :host([primary]) button {
          font-weight: 700;
        }
      </style>
      <button type="button">
        <span>${icon ? `<win-icon name="${icon}"></win-icon>` : ""}</span>
        <span class="text"><slot></slot></span>
        ${this.hasAttribute("submenu") ? `<win-icon name="submenu"></win-icon>` : ""}
      </button>
    `;
  }
}

class TaskBar extends HTMLElement {
  constructor() {
    super();
    this.attachShadow({ mode: "open" }).innerHTML = `
      <style>
        :host {
          display: flex;
          height: 40px;
          background: linear-gradient(90deg, #001923, #00131f 55%, #000a1b);
          color: #fff;
        }
        button {
          display: grid;
          place-items: center;
          width: 48px;
          padding: 0;
          border: 0;
          background: none;
          color: #fff;
        }
        .search {
          display: flex;
          align-items: center;
          gap: 10px;
          box-sizing: border-box;
          width: 288px;
          padding: 0 12px;
          border: 1px solid #c8c8c8;
          background: #f2f2f2;
        }
        input {
          flex: 1;
          min-width: 0;
          padding: 0;
          border: 0;
          outline: 0;
          background: none;
          font: inherit;
          font-size: 14px;
          line-height: 20px;
        }
        input::placeholder {
          color: #222;
        }
        .apps {
          display: flex;
          gap: 1px;
          padding-left: 3px;
        }
        .open {
          box-sizing: border-box;
          border-bottom: 2px solid #76b9ed;
          background: #33474f;
        }
        .tray {
          display: flex;
          align-items: center;
          margin-left: auto;
        }
        .tray button {
          width: 24px;
          height: 40px;
        }
        .clock {
          width: 62px;
          line-height: 18px;
          text-align: center;
        }
        .tray .notice {
          width: 44px;
        }
        .tray .peek {
          width: 5px;
          margin-left: 6px;
          border-left: 1px solid #5a6673;
        }
      </style>
      <button type="button" aria-label="Start"><win-icon name="windows"></win-icon></button>
      <div class="search">
        <win-icon name="search" size="17"></win-icon>
        <input type="text" aria-label="Type here to search" placeholder="Type here to search">
      </div>
      <button type="button" aria-label="Task view"><win-icon name="task-view"></win-icon></button>
      <div class="apps">
        <button type="button" aria-label="Edge"><win-icon name="edge" size="24"></win-icon></button>
        <button type="button" class="open" aria-label="File Explorer"><win-icon name="explorer"></win-icon></button>
        <button type="button" aria-label="Firefox"><win-icon name="firefox" size="24"></win-icon></button>
      </div>
      <div class="tray">
        <button type="button" aria-label="Show hidden icons"><win-icon name="hidden"></win-icon></button>
        <button type="button" aria-label="Camera"><win-icon name="camera"></win-icon></button>
        <button type="button" aria-label="Network"><win-icon name="ethernet"></win-icon></button>
        <button type="button" aria-label="Volume"><win-icon name="volume"></win-icon></button>
        <div class="clock">6:06 AM<br>12/6/2024</div>
        <button type="button" class="notice" aria-label="Notifications"><win-icon name="notice"></win-icon></button>
        <button type="button" class="peek" aria-label="Show desktop"></button>
      </div>
    `;
  }
}

customElements.define("win-icon", WinIcon);
customElements.define("desktop-icon", DesktopIcon);
customElements.define("brand-mark", BrandMark);
customElements.define("ribbon-group", RibbonGroup);
customElements.define("ribbon-button", RibbonButton);
customElements.define("tree-item", TreeItem);
customElements.define("explorer-window", ExplorerWindow);
customElements.define("menu-item", MenuItem);
customElements.define("context-menu", ContextMenu);
customElements.define("task-bar", TaskBar);
customElements.define("desktop-shell", DesktopShell);
</script>
</body>
</html>
